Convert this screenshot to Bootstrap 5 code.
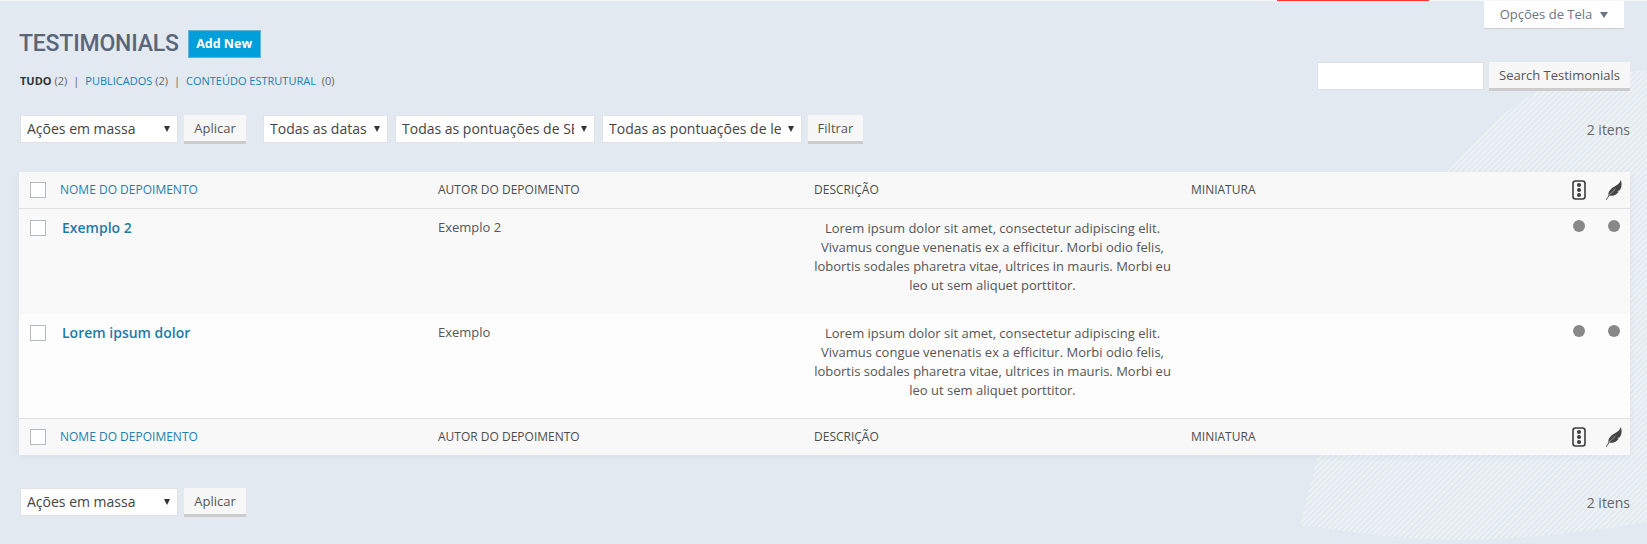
<!DOCTYPE html>
<html lang="pt-br">
<head>
  <meta charset="UTF-8">
  <meta name="viewport" content="width=device-width, initial-scale=1.0">
  <link href="https://cdn.jsdelivr.net/npm/bootstrap@5.3.0/dist/css/bootstrap.min.css" rel="stylesheet">
  <style>
    html, body { height: 100%; }
    body {
      font-family: "Open Sans", sans-serif;
      font-size: 13px;
      color: #555;
      background: #e3e9f0;
      overflow: hidden;
      position: relative;
    }
    .hachura { position: absolute; inset: 0; width: 100%; height: 100%; }
    .faixa-topo { height: 1px; background: #f6f7f8; position: relative; }
    .faixa-vermelha { position: absolute; left: 1277px; top: 0; width: 152px; height: 1px; background: #f33; }
    .pagina { position: relative; padding: 0 17px 0 19px; }
    .aba-opcoes {
      width: 140px; height: 28px; margin-right: 6px;
      background: #fff; border-bottom: 1px solid #ccc; color: #6b7685;
      font-size: 13px; gap: 8px;
    }
    .seta { width: 0; height: 0; border-left: 4px solid transparent; border-right: 4px solid transparent; border-top: 6px solid #6b7685; }
    .titulo-linha { height: 28px; margin-top: 1px; }
    .titulo {
      font-family: Roboto, sans-serif; font-weight: 500; font-size: 23px; letter-spacing: -.2px;
      color: #5a6577; text-transform: uppercase; margin: 0; line-height: 28px;
    }
    .btn-novo {
      margin-left: 9px; width: 73px; height: 28px; padding: 0; border-radius: 0;
      background: #009fd9; border: 1px solid #5fb4d8; color: #fff;
      font-weight: 700; font-size: 12.5px; line-height: 26px;
    }
    .linha-filtros { margin-top: 4px; height: 29px; }
    .subsub { font-size: 11px; text-transform: uppercase; padding: 11px 0 0 1px; line-height: 16px; color: #666; }
    .subsub a { color: #1c7fae; text-decoration: none; }
    .subsub b { color: #333; font-weight: 700; }
    .subsub .sep { margin: 0 6px; }
    .campo-busca { width: 167px; height: 28px; border: 1px solid #dcdfe3; background: #fff; border-radius: 0; padding: 0; margin-right: 5px; }
    .btn-cinza {
      height: 29px; padding: 0; border: 0; border-bottom: 3px solid #ccc; border-radius: 0;
      background: #f7f7f7; color: #555; font-size: 13px; line-height: 26px;
    }
    .btn-cinza:hover { background: #f7f7f7; color: #555; border-bottom-color: #ccc; }
    .btn-busca { width: 141px; }
    .btn-aplicar { width: 62px; margin-left: 6px; }
    .btn-filtrar { width: 55px; margin-left: 6px; }
    .barra { height: 29px; padding-left: 1px; }
    .barra-topo { margin-top: 24px; }
    .barra-base { margin-top: 33px; }
    .sel {
      height: 28px; padding: 0 20px 0 6px; border: 1px solid #dfe2e6; border-radius: 0;
      color: #444; font-family: "Open Sans", sans-serif; font-size: 14px; line-height: 26px;
      background-color: #fff;
      background-image: url("data:image/svg+xml,%3Csvg xmlns='http://www.w3.org/2000/svg' width='6' height='6'%3E%3Cpath d='M0 0h6L3 6z' fill='%23333'/%3E%3C/svg%3E");
      background-position: right 7px center; background-size: 6px 6px;
    }
    .sel-massa { width: 158px; }
    .sel-datas { width: 125px; margin-left: 17px; }
    .sel-pont { width: 200px; margin-left: 7px; }
    .contagem { margin-left: auto; font-size: 14px; color: #666; }
    .tabela-dep {
      table-layout: fixed; width: 1611px; margin: 28px 0 0; background: #fff;
      box-shadow: 0 2px 6px rgba(90, 110, 130, .08); color: #555;
    }
    .tabela-dep th, .tabela-dep td { border: 0; background: transparent; --bs-table-bg: transparent; }
    .tabela-dep thead th, .tabela-dep tfoot th {
      height: 36px; padding: 0 0 0 10px; background: #f8f8f8; font-weight: 400; font-size: 12px;
      text-transform: uppercase; color: #4c4c4c; vertical-align: middle;
    }
    .tabela-dep thead th { border-bottom: 1px solid #e1e1e1; }
    .tabela-dep tfoot th { border-top: 1px solid #e1e1e1; height: 37px; }
    .tabela-dep th a { color: #1c7fae; text-decoration: none; }
    .tabela-dep tbody td { padding: 9px 10px 18px; font-size: 13px; line-height: 19px; vertical-align: top; }
    .tabela-dep tbody tr:nth-child(1) td { background: #f9f9f9; }
    .tabela-dep tbody tr:nth-child(2) td { background: #fdfdfd; }
    .tabela-dep tbody .cel-desc { padding: 10px 8px 18px; }
    .tabela-dep tbody tr:nth-child(1) .cel-desc { padding-bottom: 19px; }
    .tabela-dep .cel-check { padding: 0 0 0 11px; }
    .tabela-dep tbody .cel-check { padding: 11px 0 0 11px; }
    .tabela-dep .cel-icone { padding: 0; text-align: center; }
    .tabela-dep tbody .cel-icone { padding: 9px 0 0; }
    .tabela-dep tbody .cel-nome { padding-left: 12px; }
    .tabela-dep .cel-nome a { color: #1f7aa6; font-weight: 600; font-size: 14px; text-decoration: none; }
    .caixa { display: block; width: 16px; height: 16px; margin: 0; border: 1px solid #b4b9be; background: #fff; border-radius: 0; }
    .bolinha { display: inline-block; width: 12px; height: 12px; border-radius: 50%; background: #888; }
    .icone { display: block; margin: 0 auto; }
    .col-1a { width: 31px; } .col-nome { width: 378px; } .col-autor { width: 376px; }
    .col-desc { width: 377px; } .col-mini { width: 380px; } .col-sem { width: 36px; } .col-pena { width: 33px; }
  </style>
  <title>Testimonials</title>
</head>
<body>
  <svg class="hachura" xmlns="http://www.w3.org/2000/svg">
    <defs>
      <pattern id="listras" width="4" height="4" patternUnits="userSpaceOnUse" patternTransform="rotate(-45)">
        <rect width="4" height="2" fill="#edf2f4"/>
      </pattern>
      <symbol id="ico-semaforo" viewBox="0 0 14 20">
        <rect x="1" y="1" width="12" height="18" rx="2.5" fill="none" stroke="#3d3d3d" stroke-width="1.6"/>
        <circle cx="7" cy="5" r="2" fill="#3d3d3d"/><circle cx="7" cy="10" r="2" fill="#3d3d3d"/><circle cx="7" cy="15" r="2" fill="#3d3d3d"/>
      </symbol>
      <symbol id="ico-pena" viewBox="0 0 17 20">
        <path d="M.6 20 3.500 15.400C2.800 11.800 5.700 8.500 9.500 6.500 12.300 5 14.800 3.200 15.900 0c1.200 3.800.9 7.400-1.100 10.300l-2.900 1 2 .2c-2.400 3.600-6 5-9.300 3.900L1.200 20.200z" fill="#444"/>
        <path d="M4 15.200 10.500 9" fill="none" stroke="#f8f8f8" stroke-width=".5"/>
      </symbol>
    </defs>
    <path d="M1647 70 C1600 75 1560 82 1537 92 C1500 110 1470 148 1447 172 C1380 260 1330 400 1300 525 C1370 535 1420 541 1470 540 C1540 538 1600 530 1647 522 Z" fill="url(#listras)"/>
  </svg>

  <div class="faixa-topo"><span class="faixa-vermelha"></span></div>

  <div class="pagina">
    <div class="d-flex justify-content-end">
      <div class="aba-opcoes d-flex align-items-center justify-content-center">Opções de Tela <span class="seta"></span></div>
    </div>

    <div class="titulo-linha d-flex align-items-center">
      <h1 class="titulo">Testimonials</h1>
      <a class="btn btn-novo" href="#">Add New</a>
    </div>

    <div class="linha-filtros d-flex justify-content-between align-items-start">
      <div class="subsub">
        <b>Tudo</b> (2)<span class="sep">|</span><a href="#">Publicados</a> (2)<span class="sep">|</span><a href="#">Conteúdo estrutural</a>&nbsp; (0)
      </div>
      <div class="d-flex">
        <input class="form-control campo-busca" type="search">
        <button class="btn btn-cinza btn-busca">Search Testimonials</button>
      </div>
    </div>

    <div class="barra barra-topo d-flex align-items-start">
      <select class="form-select sel sel-massa"><option>Ações em massa</option></select>
      <button class="btn btn-cinza btn-aplicar">Aplicar</button>
      <select class="form-select sel sel-datas"><option>Todas as datas</option></select>
      <select class="form-select sel sel-pont"><option>Todas as pontuações de SEO</option></select>
      <select class="form-select sel sel-pont"><option>Todas as pontuações de legibilidade</option></select>
      <button class="btn btn-cinza btn-filtrar">Filtrar</button>
      <span class="contagem align-self-center">2 itens</span>
    </div>

    <table class="table tabela-dep">
      <colgroup>
        <col class="col-1a"><col class="col-nome"><col class="col-autor"><col class="col-desc"><col class="col-mini"><col class="col-sem"><col class="col-pena">
      </colgroup>
      <thead>
        <tr>
          <th class="cel-check"><span class="caixa"></span></th>
          <th><a href="#">Nome do depoimento</a></th>
          <th>Autor do depoimento</th>
          <th>Descrição</th>
          <th>Miniatura</th>
          <th class="cel-icone"><svg class="icone" width="14" height="20"><use href="#ico-semaforo"/></svg></th>
          <th class="cel-icone"><svg class="icone" width="17" height="20"><use href="#ico-pena"/></svg></th>
        </tr>
      </thead>
      <tbody>
        <tr>
          <td class="cel-check"><span class="caixa"></span></td>
          <td class="cel-nome"><a href="#">Exemplo 2</a></td>
          <td>Exemplo 2</td>
          <td class="cel-desc text-center">Lorem ipsum dolor sit amet, consectetur adipiscing elit. Vivamus congue venenatis ex a efficitur. Morbi odio felis, lobortis sodales pharetra vitae, ultrices in mauris. Morbi eu leo ut sem aliquet porttitor.</td>
          <td></td>
          <td class="cel-icone"><span class="bolinha"></span></td>
          <td class="cel-icone"><span class="bolinha"></span></td>
        </tr>
        <tr>
          <td class="cel-check"><span class="caixa"></span></td>
          <td class="cel-nome"><a href="#">Lorem ipsum dolor</a></td>
          <td>Exemplo</td>
          <td class="cel-desc text-center">Lorem ipsum dolor sit amet, consectetur adipiscing elit. Vivamus congue venenatis ex a efficitur. Morbi odio felis, lobortis sodales pharetra vitae, ultrices in mauris. Morbi eu leo ut sem aliquet porttitor.</td>
          <td></td>
          <td class="cel-icone"><span class="bolinha"></span></td>
          <td class="cel-icone"><span class="bolinha"></span></td>
        </tr>
      </tbody>
      <tfoot>
        <tr>
          <th class="cel-check"><span class="caixa"></span></th>
          <th><a href="#">Nome do depoimento</a></th>
          <th>Autor do depoimento</th>
          <th>Descrição</th>
          <th>Miniatura</th>
          <th class="cel-icone"><svg class="icone" width="14" height="20"><use href="#ico-semaforo"/></svg></th>
          <th class="cel-icone"><svg class="icone" width="17" height="20"><use href="#ico-pena"/></svg></th>
        </tr>
      </tfoot>
    </table>

    <div class="barra barra-base d-flex align-items-start">
      <select class="form-select sel sel-massa"><option>Ações em massa</option></select>
      <button class="btn btn-cinza btn-aplicar">Aplicar</button>
      <span class="contagem align-self-center">2 itens</span>
    </div>
  </div>

  <script src="https://cdn.jsdelivr.net/npm/bootstrap@5.3.0/dist/js/bootstrap.bundle.min.js"></script>
</body>
</html>
